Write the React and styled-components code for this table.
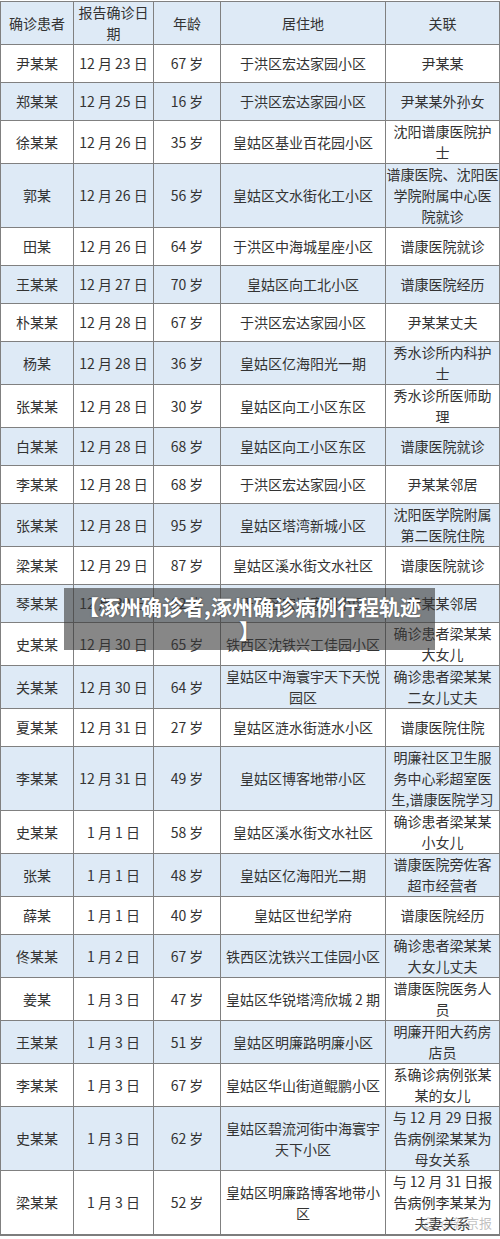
import React from 'react'
import styled, { createGlobalStyle } from 'styled-components'

const rows = [
    ['尹某某', '12 月 23 日', '67 岁', '于洪区宏达家园小区', '尹某某'],
    ['郑某某', '12 月 25 日', '16 岁', '于洪区宏达家园小区', '尹某某外孙女'],
    ['徐某某', '12 月 26 日', '35 岁', '皇姑区基业百花园小区', ['沈阳谱康医院护', '士']],
    ['郭某', '12 月 26 日', '56 岁', '皇姑区文水街化工小区', ['谱康医院、沈阳医', '学院附属中心医', '院就诊']],
    ['田某', '12 月 26 日', '64 岁', '于洪区中海城星座小区', '谱康医院就诊'],
    ['王某某', '12 月 27 日', '70 岁', '皇姑区向工北小区', '谱康医院经历'],
    ['朴某某', '12 月 28 日', '67 岁', '于洪区宏达家园小区', '尹某某丈夫'],
    ['杨某', '12 月 28 日', '36 岁', '皇姑区亿海阳光一期', ['秀水诊所内科护', '士']],
    ['张某某', '12 月 28 日', '30 岁', '皇姑区向工小区东区', ['秀水诊所医师助', '理']],
    ['白某某', '12 月 28 日', '68 岁', '皇姑区向工小区东区', '谱康医院就诊'],
    ['李某某', '12 月 28 日', '68 岁', '于洪区宏达家园小区', '尹某某邻居'],
    ['张某某', '12 月 28 日', '95 岁', '皇姑区塔湾新城小区', ['沈阳医学院附属', '第二医院住院']],
    ['梁某某', '12 月 29 日', '87 岁', '皇姑区溪水街文水社区', '谱康医院就诊'],
    ['琴某某', '12 月 30 日', '62 岁', '于洪区宏达家园小区', '尹某某邻居'],
    ['史某某', '12 月 30 日', '65 岁', '铁西区沈铁兴工佳园小区', ['确诊患者梁某某', '大女儿']],
    ['关某某', '12 月 30 日', '64 岁', ['皇姑区中海寰宇天下天悦', '园区'], ['确诊患者梁某某', '二女儿丈夫']],
    ['夏某某', '12 月 31 日', '27 岁', '皇姑区涟水街涟水小区', '谱康医院住院'],
    ['李某某', '12 月 31 日', '49 岁', '皇姑区博客地带小区', ['明廉社区卫生服', '务中心彩超室医', '生,谱康医院学习']],
    ['史某某', '1 月 1 日', '58 岁', '皇姑区溪水街文水社区', ['确诊患者梁某某', '小女儿']],
    ['张某', '1 月 1 日', '48 岁', '皇姑区亿海阳光二期', ['谱康医院旁佐客', '超市经营者']],
    ['薛某', '1 月 1 日', '40 岁', '皇姑区世纪学府', '谱康医院经历'],
    ['佟某某', '1 月 2 日', '67 岁', '铁西区沈铁兴工佳园小区', ['确诊患者梁某某', '大女儿丈夫']],
    ['姜某', '1 月 3 日', '47 岁', '皇姑区华锐塔湾欣城 2 期', ['谱康医院医务人', '员']],
    ['王某某', '1 月 3 日', '51 岁', '皇姑区明廉路明廉小区', ['明廉开阳大药房', '店员']],
    ['李某某', '1 月 3 日', '67 岁', '皇姑区华山街道鲲鹏小区', ['系确诊病例张某', '某的女儿']],
    ['史某某', '1 月 3 日', '62 岁', ['皇姑区碧流河街中海寰宇', '天下小区'], ['与 12 月 29 日报', '告病例梁某某为', '母女关系']],
    ['梁某某', '1 月 3 日', '52 岁', ['皇姑区明廉路博客地带小', '区'], ['与 12 月 31 日报', '告病例李某某为', '夫妻关系']],
]

const widths = [73, 80, 67, 165, 114]

function Lines({ value }) {
    if (!Array.isArray(value)) return value
    return value.map((line, i) => (
        <React.Fragment key={i}>
            {i > 0 && <br />}
            {line}
        </React.Fragment>
    ))
}

function App() {
    return (
        <>
            <GlobalStyle />
            <Page>
                <Table>
                    <colgroup>
                        {widths.map((w, i) => <col key={i} style={{ width: w }} />)}
                    </colgroup>
                    <thead>
                        <Row $shade>
                            <Cell as='th'>确诊患者</Cell>
                            <Cell as='th'>报告确诊日<br />期</Cell>
                            <Cell as='th'>年龄</Cell>
                            <Cell as='th'>居住地</Cell>
                            <Cell as='th'>关联</Cell>
                        </Row>
                    </thead>
                    <tbody>
                        {rows.map((r, i) => (
                            <Row key={i} $shade={i % 2 === 1}>
                                {r.map((v, j) => (
                                    <Cell key={j}><Lines value={v} /></Cell>
                                ))}
                            </Row>
                        ))}
                    </tbody>
                </Table>
                <Banner>【涿州确诊者,涿州确诊病例行程轨迹<br />】</Banner>
                <Watermark>
                    <svg width='18' height='14' viewBox='0 0 18 14'>
                        <path d='M7.5 2.2C4.3 3.6 1.5 6.4 1.5 8.8c0 2.6 3.3 4.2 6.8 4.2 4.4 0 7.6-2.4 7.6-4.6 0-1.4-1.2-2-2.2-2.3.3-.9.4-2-.6-2.3-1-.3-2.6.4-2.6.4s.3-1.3-.4-1.8c-.7-.5-1.8-.4-2.6-.2z' fill='none' stroke='currentColor' strokeWidth='1.2' />
                        <ellipse cx='8' cy='9.2' rx='3.4' ry='2.4' fill='none' stroke='currentColor' strokeWidth='1' />
                    </svg>
                    <span>@新京报</span>
                </Watermark>
            </Page>
        </>
    )
}

export default App

const GlobalStyle = createGlobalStyle`
    body {
        margin: 0;
        background: #fff;
    }
`
const Page = styled.div`
    position: relative;
    width: 500px;
    padding-top: 1px;
    font-family: "Noto Sans CJK SC", "Noto Sans", sans-serif;
    color: #333;
`
const Table = styled.table`
    width: 499px;
    table-layout: fixed;
    border-collapse: collapse;
    border: 1px solid #7d7d7d;
    border-bottom-width: 2px;
`
const Row = styled.tr`
    height: 38px;
    background: ${p => (p.$shade ? '#deeaf6' : '#ffffff')};
`
const Cell = styled.td`
    border: 1px solid #808080;
    padding: 0;
    font-size: 14px;
    font-weight: 400;
    line-height: 21px;
    text-align: center;
    vertical-align: middle;
    white-space: nowrap;
    overflow: hidden;
`
const Banner = styled.div`
    position: absolute;
    top: 588px;
    left: 64px;
    width: 371px;
    height: 62px;
    box-sizing: border-box;
    padding-top: 6px;
    background: rgba(55, 55, 55, 0.6);
    color: #fff;
    font-size: 21px;
    font-weight: 700;
    line-height: 24px;
    text-align: center;
    white-space: nowrap;
    text-shadow: 0 0 2px rgba(0, 0, 0, 0.45);
`
const Watermark = styled.div`
    position: absolute;
    right: 8px;
    bottom: 4px;
    display: flex;
    align-items: center;
    gap: 3px;
    color: rgba(140, 140, 140, 0.55);
    font-size: 13px;
`
